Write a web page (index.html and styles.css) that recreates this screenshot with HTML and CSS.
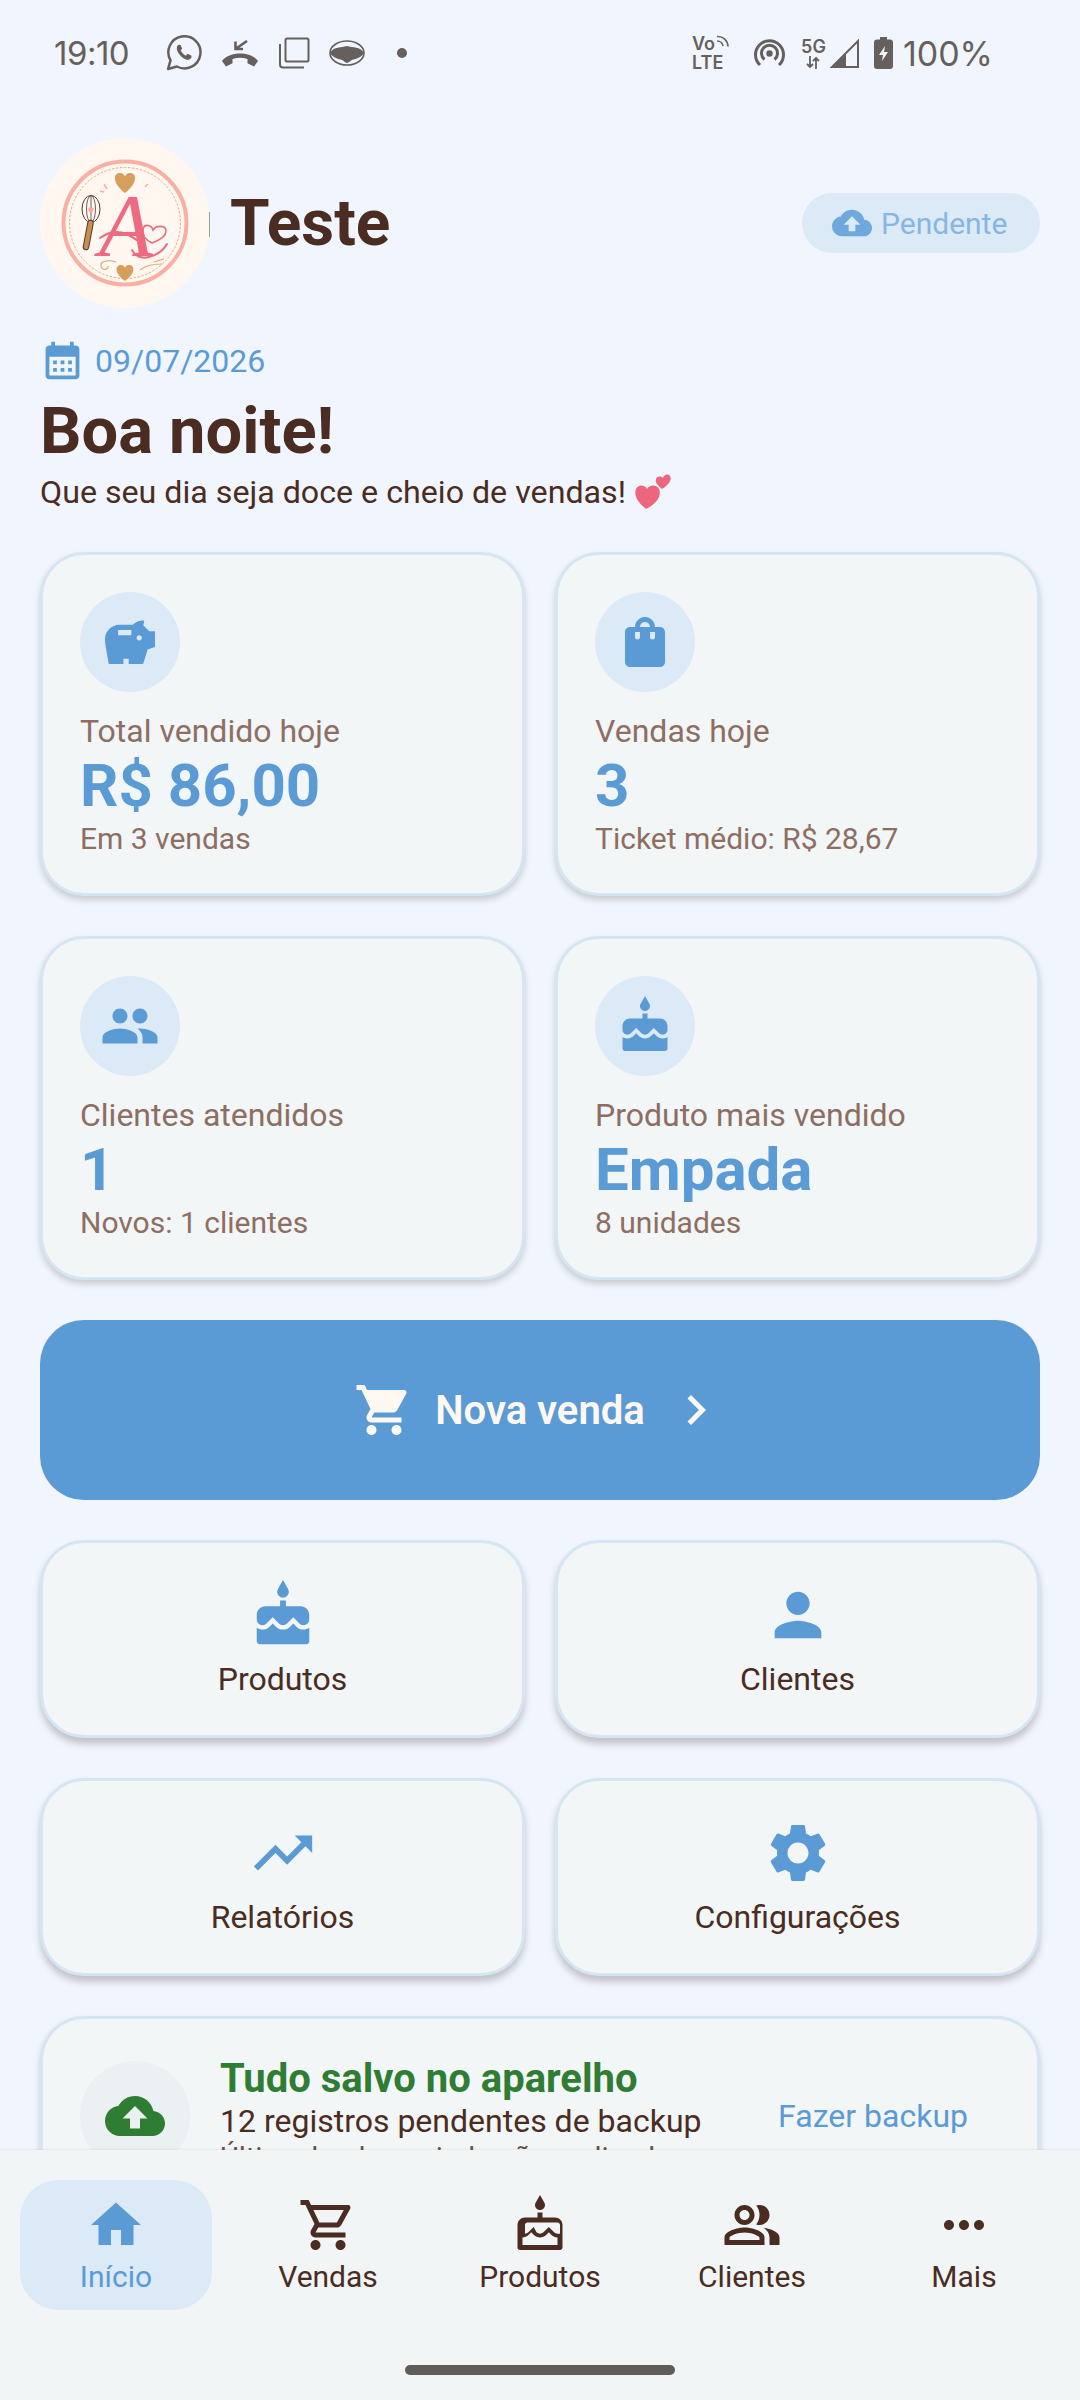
FILE: index.html
```html
<!DOCTYPE html>
<html lang="pt-BR">
<head>
  <meta charset="UTF-8" />
  <meta name="viewport" content="width=device-width, initial-scale=1.0" />
  <title>Início</title>
  <link rel="stylesheet" href="styles.css">
</head>
<body>
  <div class="app">
    <div class="status">
      <div class="st-group">
        <span class="st-time">19:10</span>
        <svg class="st-whats" width="36" height="36" viewBox="0 0 35 35"><path d="M2 33l2.400-8.400A15.600 15.600 0 1 1 10.600 30.600z" fill="none" stroke="currentColor" stroke-width="2.400" stroke-linejoin="round"/><path fill="currentColor" d="M12.200 9.600c-1.200 1-2.200 2.400-1.400 5.200 1 3.200 5 8 9.200 9.200 2.200.6 4.200-.8 4.800-2.400l-.2-1.600-3.600-1.800-1.700 1.900c-2-.8-4-3-5-5.200l1.400-1.600-1.500-3.600z"/></svg>
        <svg width="38" height="27" viewBox="0 0 38 27"><path fill="currentColor" d="M1 21C8 11 30 11 37 21l-4 5.500-6.500-3.200V19c-5-1.600-10-1.600-15 0v4.300L5 26.500z"/><path d="M14.500 1.500V9h7.500M14.500 9L26 1" fill="none" stroke="currentColor" stroke-width="2.600"/></svg>
        <svg width="32" height="32" viewBox="0 0 32 32"><rect x="7.500" y="1.500" width="23" height="23" rx="1.500" fill="none" stroke="currentColor" stroke-width="2"/><path d="M2 7v20.500a3 3 0 0 0 3 3h21" fill="none" stroke="currentColor" stroke-width="2"/></svg>
        <svg width="36" height="26" viewBox="0 0 36 26"><ellipse cx="18" cy="13" rx="17" ry="12" fill="none" stroke="currentColor" stroke-width="1.600"/><path fill="currentColor" d="M1 13c4-7 11-5 17-7 6 2 13 0 17 7-3 5-9 6-12 7-2 .5-3 3-5 3s-3-2.500-5-3c-3-1-9-2-12-7z"/></svg>
        <span class="st-dot"></span>
      </div>
      <div class="st-group st-right">
        <span class="st-volte"><span class="st-vo">Vo<svg width="14" height="14" viewBox="0 0 14 14"><path d="M1 2.500a10 10 0 0 1 11 10M1 7a6 6 0 0 1 6 5" fill="none" stroke="currentColor" stroke-width="1.600"/></svg></span><span>LTE</span></span>
        <svg class="st-hot" width="31" height="28" viewBox="0 0 31 28"><path d="M6 26A14 14 0 1 1 25 26M10.500 20.500A8 8 0 1 1 20.500 20.500" fill="none" stroke="currentColor" stroke-width="3"/><circle cx="15.500" cy="14.500" r="3.200" fill="currentColor"/></svg>
        <span class="st-5g"><span>5G</span><svg width="14" height="13" viewBox="0 0 14 13"><path d="M4 0v11M1 8l3 3 3-3M10 13V2M7 5l3-3 3 3" fill="none" stroke="currentColor" stroke-width="1.800"/></svg></span>
        <svg class="st-signal" width="29" height="29" viewBox="0 0 29 29"><path d="M2 28L28 2v26z" fill="none" stroke="currentColor" stroke-width="2"/><path d="M1 29L16 14v15z" fill="currentColor"/></svg>
        <svg class="st-batt" width="19" height="32" viewBox="0 0 19 32"><path fill="currentColor" fill-rule="evenodd" d="M6 0h7v2.500h3a3 3 0 0 1 3 3V29a3 3 0 0 1-3 3H3a3 3 0 0 1-3-3V5.500a3 3 0 0 1 3-3h3zM11 9l-6 9h4l-1 6 6-9h-4z"/></svg>
        <span class="st-batt-text">100%</span>
      </div>
    </div>

    <div class="main">
      <div class="header">
        <svg class="logo" width="170" height="170" viewBox="0 0 170 170">
          <circle cx="85" cy="85" r="85" fill="#fff7f0"/>
          <rect x="169" y="74" width="1" height="25" fill="#7fae84"/>
          <circle cx="85" cy="85" r="61.500" fill="none" stroke="#f9b0a4" stroke-width="4"/>
          <circle cx="85" cy="85" r="55.500" fill="none" stroke="#e8a26c" stroke-width="0.900" stroke-dasharray="2.500 1.500"/>
          <path fill="#d69f5c" d="M85 55C72 45 73 35 80 35c2.500 0 4 1.500 5 3.500 1-2 2.500-3.500 5-3.500 7 0 8 10-5 20z"/>
          <path fill="#d69f5c" d="M85 143c-11-8-10-16-4-16 2 0 3.300 1.200 4 2.800.7-1.600 2-2.800 4-2.800 6 0 7 8-4 16z"/>
          <path d="M64 46l3 5M60 53l4 1M108 46l-3 3" stroke="#f9b0a4" stroke-width="1.500" fill="none"/>
          <ellipse cx="51" cy="71" rx="9" ry="13.500" fill="none" stroke="#4e3a34" stroke-width="1"/>
          <ellipse cx="51" cy="71" rx="4.500" ry="13.500" fill="none" stroke="#4e3a34" stroke-width="0.800"/>
          <path d="M51 58v26" stroke="#4e3a34" stroke-width="0.800"/>
          <path fill="#f9a8a0" d="M51 75c-4-3-3-5.500-1-5.500.5 0 .8.300 1 .8.200-.5.500-.8 1-.8 2 0 3 2.500-1 5.500z"/>
          <path d="M50.500 85L46 109" stroke="#4e3a34" stroke-width="6.500" stroke-linecap="round"/>
          <path d="M50.500 85L46 109" stroke="#c98d4e" stroke-width="4.500" stroke-linecap="round"/>
          <text class="logo-a" x="86" y="117">A</text>
          <path d="M60 100c12-9 24-8 38 3M92 112c4 7 9 9 17 7 8-2 14-6 18-13" fill="none" stroke="#ee6a80" stroke-width="2" stroke-linecap="round"/>
          <path d="M112 105c-8-4-10-9-9-14 1-5 8-5 10 1 3-5 13-5 13 1 0 5-6 9-14 12z" fill="none" stroke="#ee6a80" stroke-width="1.600"/>
          <path d="M76 124c-6-2-16-2-15 4 1 5 8 4 7 0M100 132c6-5 14-6 22-6M114 124l10-3" fill="none" stroke="#e8a26c" stroke-width="1.200"/>
        </svg>
        <div class="brand">Teste</div>
        <div class="pill">
          <svg width="40" height="40" viewBox="0 0 24 24"><path d="M19.350 10.040C18.670 6.590 15.640 4 12 4 9.110 4 6.600 5.640 5.350 8.040 2.340 8.360 0 10.910 0 14c0 3.310 2.690 6 6 6h13c2.760 0 5-2.240 5-5 0-2.640-2.050-4.780-4.650-4.960zM14 13v4h-4v-4H7l5-5 5 5h-3z"/></svg>
          <span>Pendente</span>
        </div>
      </div>

      <div class="date">
        <svg width="45" height="45" viewBox="0 0 24 24"><path d="M19 4h-1V2h-2v2H8V2H6v2H5c-1.100 0-2 .9-2 2v14c0 1.100.9 2 2 2h14c1.100 0 2-.9 2-2V6c0-1.100-.9-2-2-2zm0 16H5V10h14v10zM9 14H7v-2h2v2zm4 0h-2v-2h2v2zm4 0h-2v-2h2v2zm-8 4H7v-2h2v2zm4 0h-2v-2h2v2zm4 0h-2v-2h2v2z"/></svg>
        <span>09/07/2026</span>
      </div>
      <h1 class="greeting">Boa noite!</h1>
      <p class="subtitle">Que seu dia seja doce e cheio de vendas!
        <svg width="38" height="38" viewBox="0 0 38 36"><path fill="#ee667e" d="M12 35C2 27 0 20 2 15c2-4 8-5 11 0 2-4 9-5 12 0 3 6-2 15-13 20z"/><path fill="#ee667e" d="M28 15c-5-4-7-7-6-10 1-3 5-3 7-1 .5-3 5-5 7-2 2 3 0 8-8 13z"/></svg>
      </p>

      <div class="grid stats">
        <div class="card stat">
          <div class="stat-icon"><svg width="60" height="60" viewBox="1.100 0.200 22.800 22.800"><path d="M19.830 7.500l-2.270-2.270c.07-.42.18-.81.32-1.150.16-.38-.12-.81-.54-.79-1.050.07-2.800.7-3.840 1.710H8.500C5.460 5 3 7.460 3 10.500 3 13 4.500 20 4.500 20H10v-2h2v2h5.500l1.680-5.590L22 13.470V7.500h-2.170zM13 9H8V7h5v2zm3 2c-.55 0-1-.45-1-1s.45-1 1-1 1 .45 1 1-.45 1-1 1z"/></svg></div>
          <div class="stat-label">Total vendido hoje</div>
          <div class="stat-value">R$ 86,00</div>
          <div class="stat-sub">Em 3 vendas</div>
        </div>
        <div class="card stat">
          <div class="stat-icon"><svg width="60" height="60" viewBox="0 0 24 24"><path d="M18 6h-2c0-2.210-1.790-4-4-4S8 3.790 8 6H6c-1.100 0-2 .9-2 2v12c0 1.100.9 2 2 2h12c1.100 0 2-.9 2-2V8c0-1.100-.9-2-2-2zm-8 4c0 .55-.45 1-1 1s-1-.45-1-1V8h2v2zm2-6c1.100 0 2 .9 2 2h-4c0-1.100.9-2 2-2zm4 6c0 .55-.45 1-1 1s-1-.45-1-1V8h2v2z"/></svg></div>
          <div class="stat-label">Vendas hoje</div>
          <div class="stat-value">3</div>
          <div class="stat-sub">Ticket médio: R$ 28,67</div>
        </div>
        <div class="card stat">
          <div class="stat-icon"><svg width="60" height="60" viewBox="0 0 24 24"><path d="M16 11c1.660 0 2.990-1.340 2.990-3S17.660 5 16 5c-1.660 0-3 1.340-3 3s1.340 3 3 3zm-8 0c1.660 0 2.990-1.340 2.990-3S9.660 5 8 5C6.340 5 5 6.340 5 8s1.340 3 3 3zm0 2c-2.330 0-7 1.170-7 3.500V19h14v-2.500c0-2.330-4.670-3.500-7-3.500zm8 0c-.29 0-.62.02-.97.05 1.160.84 1.970 1.970 1.970 3.450V19h6v-2.500c0-2.330-4.670-3.500-7-3.500z"/></svg></div>
          <div class="stat-label">Clientes atendidos</div>
          <div class="stat-value">1</div>
          <div class="stat-sub">Novos: 1 clientes</div>
        </div>
        <div class="card stat">
          <div class="stat-icon"><svg width="60" height="60" viewBox="0 0 24 24"><path d="M12 6c1.110 0 2-.9 2-2 0-.38-.1-.73-.29-1.030L12 0l-1.710 2.970c-.19.3-.29.65-.29 1.030 0 1.100.9 2 2 2zm4.600 9.990l-1.070-1.070-1.080 1.070c-1.300 1.300-3.580 1.310-4.890 0l-1.070-1.070-1.090 1.070C6.750 16.640 5.880 17 4.960 17c-.73 0-1.400-.23-1.960-.61V21c0 .55.45 1 1 1h16c.55 0 1-.45 1-1v-4.610c-.56.38-1.230.61-1.960.61-.92 0-1.790-.36-2.440-1.010zM18 9h-5V7h-2v2H6c-1.660 0-3 1.340-3 3v1.540c0 1.080.88 1.960 1.960 1.960.52 0 1.020-.2 1.380-.57l2.140-2.130 2.130 2.130c.74.74 2.030.74 2.770 0l2.140-2.130 2.130 2.130c.37.37.86.57 1.380.57 1.080 0 1.960-.88 1.960-1.960V12C21 10.340 19.660 9 18 9z"/></svg></div>
          <div class="stat-label">Produto mais vendido</div>
          <div class="stat-value">Empada</div>
          <div class="stat-sub">8 unidades</div>
        </div>
      </div>

      <div class="new-sale">
        <svg width="60" height="60" viewBox="0 0 24 24"><path d="M7 18c-1.100 0-1.990.9-1.990 2S5.900 22 7 22s2-.9 2-2-.9-2-2-2zM1 2v2h2l3.600 7.590-1.350 2.450c-.16.28-.25.61-.25.96 0 1.100.9 2 2 2h12v-2H7.420c-.14 0-.25-.11-.25-.25l.03-.12.9-1.630h7.450c.75 0 1.410-.41 1.750-1.030l3.580-6.490c.08-.14.12-.31.12-.48 0-.55-.45-1-1-1H5.210l-.94-2H1zm16 16c-1.100 0-1.990.9-1.990 2s.89 2 1.990 2 2-.9 2-2-.9-2-2-2z"/></svg>
        <span>Nova venda</span>
        <svg width="60" height="60" viewBox="0 0 24 24"><path d="M10 6L8.590 7.410 13.170 12l-4.580 4.590L10 18l6-6z"/></svg>
      </div>

      <div class="grid actions">
        <div class="card action">
          <svg width="70" height="70" viewBox="0 0 24 24"><path d="M12 6c1.110 0 2-.9 2-2 0-.38-.1-.73-.29-1.030L12 0l-1.710 2.970c-.19.3-.29.65-.29 1.030 0 1.100.9 2 2 2zm4.600 9.990l-1.070-1.070-1.080 1.070c-1.300 1.300-3.580 1.310-4.890 0l-1.070-1.070-1.090 1.070C6.750 16.640 5.880 17 4.960 17c-.73 0-1.400-.23-1.960-.61V21c0 .55.45 1 1 1h16c.55 0 1-.45 1-1v-4.610c-.56.38-1.230.61-1.960.61-.92 0-1.790-.36-2.440-1.010zM18 9h-5V7h-2v2H6c-1.660 0-3 1.340-3 3v1.540c0 1.080.88 1.960 1.960 1.960.52 0 1.020-.2 1.380-.57l2.140-2.130 2.130 2.130c.74.74 2.030.74 2.770 0l2.140-2.130 2.130 2.130c.37.37.86.57 1.380.57 1.080 0 1.960-.88 1.960-1.960V12C21 10.340 19.660 9 18 9z"/></svg>
          <span>Produtos</span>
        </div>
        <div class="card action">
          <svg width="70" height="70" viewBox="0 0 24 24"><path d="M12 12c2.210 0 4-1.790 4-4s-1.790-4-4-4-4 1.790-4 4 1.790 4 4 4zm0 2c-2.670 0-8 1.340-8 4v2h16v-2c0-2.660-5.330-4-8-4z"/></svg>
          <span>Clientes</span>
        </div>
        <div class="card action">
          <svg width="70" height="70" viewBox="0 0 24 24"><path d="M16 6l2.290 2.290-4.880 4.880-4-4L2 16.590 3.410 18l6-6 4 4 6.300-6.290L22 12V6z"/></svg>
          <span>Relatórios</span>
        </div>
        <div class="card action">
          <svg width="70" height="70" viewBox="0 0 24 24"><path d="M19.140 12.940c.04-.3.06-.61.06-.94 0-.32-.02-.64-.07-.94l2.030-1.580c.18-.14.23-.41.12-.61l-1.920-3.320c-.12-.22-.37-.29-.59-.22l-2.390.96c-.5-.38-1.030-.7-1.620-.94l-.36-2.540c-.04-.24-.24-.41-.48-.41h-3.840c-.24 0-.43.17-.47.41l-.36 2.540c-.59.24-1.130.57-1.620.94l-2.390-.96c-.22-.08-.47 0-.59.22L2.740 8.870c-.12.21-.08.47.12.61l2.030 1.580c-.05.3-.09.63-.09.94s.02.64.07.94l-2.030 1.580c-.18.14-.23.41-.12.61l1.920 3.320c.12.22.37.29.59.22l2.390-.96c.5.38 1.030.7 1.620.94l.36 2.540c.05.24.24.41.48.41h3.840c.24 0 .44-.17.47-.41l.36-2.540c.59-.24 1.130-.56 1.620-.94l2.390.96c.22.08.47 0 .59-.22l1.920-3.320c.12-.22.07-.47-.12-.61l-2.010-1.580zM12 15.600c-1.980 0-3.600-1.620-3.600-3.600s1.620-3.600 3.600-3.600 3.600 1.620 3.600 3.600-1.620 3.600-3.600 3.600z"/></svg>
          <span>Configurações</span>
        </div>
      </div>

      <div class="card backup">
        <div class="backup-icon"><svg width="60" height="60" viewBox="0 0 24 24"><path d="M19.350 10.040C18.670 6.590 15.640 4 12 4 9.110 4 6.600 5.640 5.350 8.040 2.340 8.360 0 10.910 0 14c0 3.310 2.690 6 6 6h13c2.760 0 5-2.240 5-5 0-2.640-2.050-4.780-4.650-4.960zM14 13v4h-4v-4H7l5-5 5 5h-3z"/></svg></div>
        <div class="backup-text">
          <div class="backup-title">Tudo salvo no aparelho</div>
          <div class="backup-line">12 registros pendentes de backup</div>
          <div class="backup-last">Último backup: ainda não realizado</div>
        </div>
        <div class="backup-link">Fazer backup</div>
      </div>
    </div>

    <div class="nav">
      <div class="nav-items">
        <div class="nav-item active">
          <svg width="60" height="60" viewBox="0 0 24 24"><path d="M10 20v-6h4v6h5v-8h3L12 3 2 12h3v8z"/></svg>
          <span>Início</span>
        </div>
        <div class="nav-item">
          <svg width="60" height="60" viewBox="0 0 24 24"><path d="M15.550 13c.75 0 1.410-.41 1.750-1.030l3.580-6.490c.37-.66-.11-1.480-.87-1.480H5.210l-.94-2H1v2h2l3.600 7.590-1.350 2.440C4.520 15.370 5.480 17 7 17h12v-2H7l1.100-2h7.450zM6.160 6h12.150l-2.760 5H8.530L6.160 6zM7 18c-1.100 0-1.990.9-1.990 2S5.900 22 7 22s2-.9 2-2-.9-2-2-2zm10 0c-1.100 0-1.990.9-1.990 2s.89 2 1.990 2 2-.9 2-2-.9-2-2-2z"/></svg>
          <span>Vendas</span>
        </div>
        <div class="nav-item">
          <svg width="60" height="60" viewBox="0 0 24 24"><path d="M12 6c1.110 0 2-.9 2-2 0-.38-.1-.73-.29-1.030L12 0l-1.710 2.970c-.19.3-.29.65-.29 1.030 0 1.100.9 2 2 2zm6 3h-5V7h-2v2H6c-1.660 0-3 1.340-3 3v9c0 .55.45 1 1 1h16c.55 0 1-.45 1-1v-9c0-1.660-1.340-3-3-3zm1 11H5v-3c.9-.01 1.760-.37 2.400-1.010l1.090-1.070 1.070 1.070c1.310 1.310 3.590 1.300 4.890 0l1.080-1.070 1.070 1.070c.64.64 1.500 1 2.400 1.010V20zm0-4.500c-.51-.01-.99-.2-1.350-.57l-2.130-2.130-2.140 2.130c-.74.74-2.030.74-2.770 0L9.480 12.800l-2.140 2.130c-.35.36-.83.56-1.340.57V12c0-.55.45-1 1-1h12c.55 0 1 .45 1 1v3.500z"/></svg>
          <span>Produtos</span>
        </div>
        <div class="nav-item">
          <svg width="60" height="60" viewBox="0 0 24 24"><path d="M16.670 13.130C18.040 14.060 19 15.320 19 17v3h4v-3c0-2.180-3.570-3.470-6.330-3.870zM15 12c2.210 0 4-1.790 4-4s-1.790-4-4-4c-.47 0-.91.1-1.330.24C14.500 5.270 15 6.580 15 8s-.5 2.730-1.330 3.760c.42.14.86.24 1.330.24zM9 12c2.210 0 4-1.790 4-4s-1.790-4-4-4-4 1.790-4 4 1.790 4 4 4zm0-6c1.100 0 2 .9 2 2s-.9 2-2 2-2-.9-2-2 .9-2 2-2zM9 13c-2.670 0-8 1.340-8 4v3h16v-3c0-2.660-5.330-4-8-4zm6 5H3v-.99C3.200 16.290 6.300 15 9 15s5.800 1.290 6 2v1z"/></svg>
          <span>Clientes</span>
        </div>
        <div class="nav-item">
          <svg width="60" height="60" viewBox="0 0 24 24"><path d="M6 10c-1.100 0-2 .9-2 2s.9 2 2 2 2-.9 2-2-.9-2-2-2zm12 0c-1.100 0-2 .9-2 2s.9 2 2 2 2-.9 2-2-.9-2-2-2zm-6 0c-1.100 0-2 .9-2 2s.9 2 2 2 2-.9 2-2-.9-2-2-2z"/></svg>
          <span>Mais</span>
        </div>
      </div>
      <div class="home-bar"></div>
    </div>
  </div>
</body>
</html>
```

FILE: styles.css
```css
* {
  margin: 0;
  padding: 0;
  box-sizing: border-box;
}

body {
  font-family: 'Roboto', 'Liberation Sans', sans-serif;
  background-color: #f1f6fe;
  color: #4a2c22;
  width: 1080px;
  height: 2400px;
  overflow: hidden;
}

.app {
  height: 2400px;
  display: flex;
  flex-direction: column;
}

/* status bar */
.status {
  height: 106px;
  flex-shrink: 0;
  padding: 0 87px 0 54px;
  display: flex;
  align-items: center;
  justify-content: space-between;
  color: #65605d;
  font-family: 'Inter', sans-serif;
}

.st-group {
  display: flex;
  align-items: center;
  gap: 19px;
}

.st-time {
  font-size: 33px;
  letter-spacing: -0.5px;
}

.st-whats {
  margin-left: 18px;
}

.st-dot {
  width: 10px;
  height: 10px;
  border-radius: 50%;
  background: currentColor;
  margin-left: 13px;
}

.st-right {
  gap: 0;
}

.st-volte {
  display: flex;
  flex-direction: column;
  font-size: 18px;
  line-height: 19px;
  font-weight: 600;
}

.st-vo {
  display: flex;
  align-items: flex-start;
  gap: 1px;
}

.st-hot {
  margin-left: 24px;
}

.st-5g {
  margin-left: 16px;
  display: flex;
  flex-direction: column;
  align-items: center;
  font-size: 18px;
  line-height: 18px;
  font-weight: 600;
}

.st-signal {
  margin-left: 4px;
}

.st-batt {
  margin-left: 15px;
}

.st-batt-text {
  margin-left: 10px;
  font-size: 34px;
}

/* content */
.main {
  flex: 1;
  overflow: hidden;
  padding: 32px 40px 0;
}

.header {
  display: flex;
  align-items: center;
  gap: 20px;
}

.logo {
  flex-shrink: 0;
}

.logo-a {
  font-family: 'Liberation Serif', serif;
  font-style: italic;
  font-size: 88px;
  fill: #ee6a80;
  text-anchor: middle;
}

.brand {
  font-size: 64px;
  font-weight: 700;
}

.pill {
  margin-left: auto;
  width: 238px;
  height: 60px;
  border-radius: 30px;
  background: #dceaf8;
  padding-left: 30px;
  display: flex;
  align-items: center;
  gap: 9px;
  color: #86b6e2;
  font-size: 30px;
}

.pill svg {
  fill: #6ea8dc;
}

.date {
  margin-top: 30px;
  display: flex;
  align-items: center;
  gap: 10px;
  color: #5b9bd5;
  font-size: 32px;
}

.date svg {
  fill: #5b9bd5;
}

.greeting {
  margin-top: 10px;
  font-size: 65px;
  line-height: 76px;
  font-weight: 700;
}

.subtitle {
  margin-top: 3px;
  font-size: 32.200px;
  line-height: 40px;
  display: flex;
  align-items: center;
  gap: 8px;
}

.grid {
  display: grid;
  grid-template-columns: 485px 485px;
  gap: 40px 30px;
}

.stats {
  margin-top: 40px;
}

.card {
  background: #f2f6f7;
  border: 3px solid #d5e5f2;
  border-radius: 44px;
  box-shadow: 0 4px 6px rgba(60, 50, 45, 0.22);
}

.stat {
  padding: 37px 37px 36px;
}

.stat-icon {
  width: 100px;
  height: 100px;
  border-radius: 50%;
  background: #dceaf8;
  display: flex;
  align-items: center;
  justify-content: center;
  margin-bottom: 19px;
}

.stat-icon svg, .action svg {
  fill: #5b9bd5;
}

.stat-label {
  font-size: 32px;
  line-height: 40px;
  color: #8d6e63;
}

.stat-value {
  font-size: 60px;
  line-height: 70px;
  font-weight: 700;
  color: #5b9bd5;
}

.stat-sub {
  font-size: 30px;
  line-height: 36px;
  color: #8d6e63;
}

.new-sale {
  margin-top: 40px;
  height: 180px;
  border-radius: 44px;
  background: #5b9bd5;
  color: #fff8f2;
  display: flex;
  align-items: center;
  justify-content: center;
  gap: 21px;
  font-size: 40px;
  font-weight: 600;
}

.new-sale svg {
  fill: #fff8f2;
}

.actions {
  margin-top: 40px;
}

.action {
  padding: 37px 10px 36px;
  display: flex;
  flex-direction: column;
  align-items: center;
  box-shadow: 0 6px 7px rgba(60, 50, 45, 0.26);
  font-size: 32px;
  line-height: 40px;
}

.action span {
  margin-top: 9px;
}

.backup {
  margin-top: 40px;
  height: 200px;
  padding: 0 37px;
  display: flex;
  align-items: center;
}

.backup-icon {
  width: 110px;
  height: 110px;
  border-radius: 50%;
  background: #ebf0f2;
  display: flex;
  align-items: center;
  justify-content: center;
  flex-shrink: 0;
}

.backup-icon svg {
  fill: #2e7d32;
}

.backup-text {
  margin-left: 30px;
  flex: 1;
  white-space: nowrap;
}

.backup-title {
  font-size: 40px;
  line-height: 46px;
  font-weight: 700;
  color: #2e7d32;
}

.backup-line {
  font-size: 32px;
  line-height: 38px;
}

.backup-last {
  font-size: 29px;
  line-height: 36px;
  color: #6d5148;
}

.backup-link {
  font-size: 32px;
  color: #5b9bd5;
  margin-right: 32px;
  white-space: nowrap;
}

/* bottom nav */
.nav {
  height: 250px;
  flex-shrink: 0;
  background: #f1f5f6;
  box-shadow: 0 -1px 2px rgba(0, 0, 0, 0.06);
  position: relative;
  padding: 30px 10px 0;
}

.nav-items {
  display: grid;
  grid-template-columns: repeat(5, 1fr);
}

.nav-item {
  margin: 0 10px;
  height: 130px;
  padding-top: 15px;
  border-radius: 38px;
  display: flex;
  flex-direction: column;
  align-items: center;
  font-size: 30px;
  line-height: 36px;
}

.nav-item svg {
  fill: #4a2c22;
  margin-bottom: 4px;
}

.nav-item.active {
  background: #dceaf8;
  color: #5b9bd5;
}

.nav-item.active svg {
  fill: #5b9bd5;
}

.home-bar {
  width: 270px;
  height: 10px;
  border-radius: 5px;
  background: #605c5a;
  margin: 55px auto 0;
}
```
